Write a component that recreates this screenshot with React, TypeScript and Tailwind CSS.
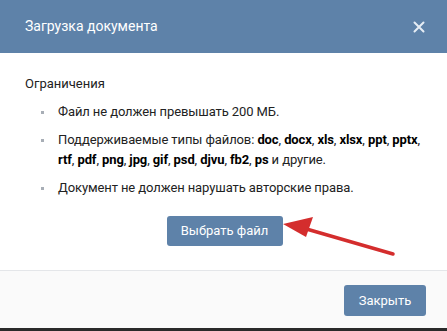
const FILE_TYPES = ['doc', 'docx', 'xls', 'xlsx', 'ppt', 'pptx', 'rtf', 'pdf', 'png', 'jpg', 'gif', 'psd', 'djvu', 'fb2', 'ps'];

function Bullet({ children }: { children: React.ReactNode }) {
  return (
    <li className="flex">
      <span className="w-[33px] flex-shrink-0 flex items-start">
        <span className="mt-[9px] ml-[16px] w-[3px] h-[3px] bg-[#a8aeb6]" />
      </span>
      <span className="flex-1">{children}</span>
    </li>
  );
}

function CloseIcon() {
  return (
    <svg className="w-[12px] h-[12px]" viewBox="0 0 12 12" fill="none" stroke="#e6edf5" strokeWidth={2} strokeLinecap="round">
      <path d="M1.5 1.5l9 9M10.5 1.5l-9 9" />
    </svg>
  );
}

export default function App() {
  return (
    <div className="w-[447px] h-[331px] flex flex-col bg-white text-[13px] text-[#222] font-['Roboto','Liberation_Sans',sans-serif] overflow-hidden">
      <div className="h-[53px] flex-shrink-0 bg-[#5e82a9] flex items-center justify-between pl-[25px] pr-[22px]">
        <span className="text-[14px] text-white">Загрузка документа</span>
        <CloseIcon />
      </div>

      <div className="relative pl-[25px] pr-[10px] pt-[21px] pb-[24px] leading-[20px]">
        <p>Ограничения</p>
        <ul className="mt-[8px] flex flex-col gap-[8px] tracking-[-0.1px]">
          <Bullet>Файл не должен превышать 200 МБ.</Bullet>
          <Bullet>
            Поддерживаемые типы файлов:{' '}
            {FILE_TYPES.map((t, i) => (
              <span key={t}>
                <b className="font-bold text-black">{t}</b>
                {i < FILE_TYPES.length - 1 ? ', ' : ' '}
              </span>
            ))}
            и другие.
          </Bullet>
          <Bullet>Документ не должен нарушать авторские права.</Bullet>
        </ul>
        <div className="mt-[18px] flex justify-center pr-[13px]">
          <button className="w-[116px] h-[30px] rounded-[3px] bg-[#5e82a9] text-white text-[13px]">Выбрать файл</button>
        </div>

        <svg className="absolute left-[278px] top-[160px] w-[120px] h-[40px] overflow-visible" viewBox="0 0 120 40">
          <path d="M115 41L25 15" stroke="#d42d2d" strokeWidth={3.5} strokeLinecap="round" />
          <polygon points="5,11 35,4 28,24" fill="#d42d2d" />
        </svg>
      </div>

      <div className="flex-1 bg-[#fafafa] border-t border-[#e4e6e9] flex justify-end items-start pt-[14px] pr-[21px]">
        <button className="w-[82px] h-[31px] rounded-[3px] bg-[#5e82a9] text-white text-[13px]">Закрыть</button>
      </div>
      <div className="h-[3px] flex-shrink-0 bg-[#2a2a2a]" />
    </div>
  );
}
